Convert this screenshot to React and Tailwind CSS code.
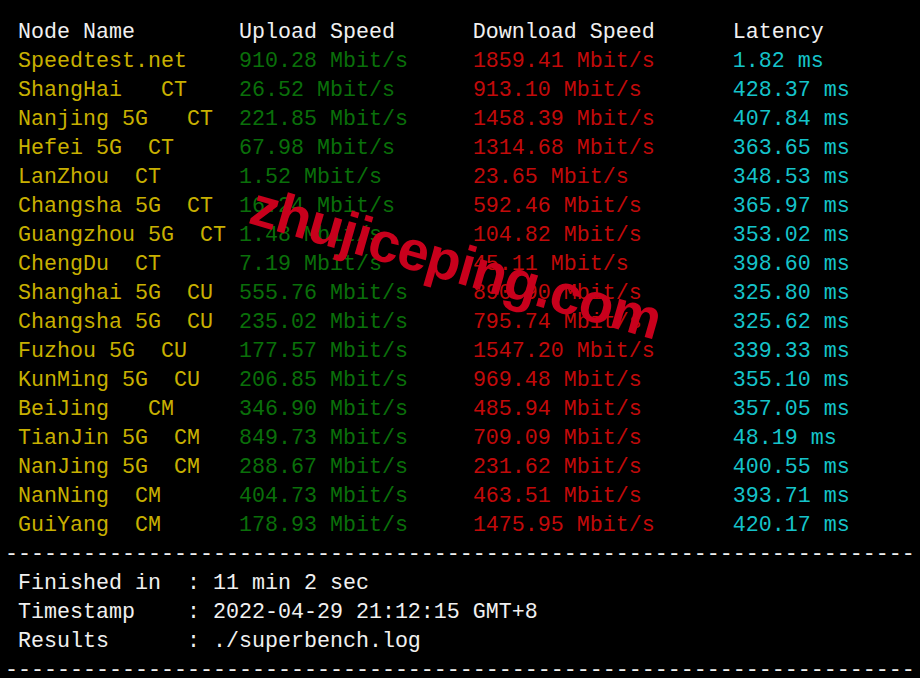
import React from "react";

const rows = [
  ["Speedtest.net", "910.28 Mbit/s", "1859.41 Mbit/s", "1.82 ms"],
  ["ShangHai   CT", "26.52 Mbit/s", "913.10 Mbit/s", "428.37 ms"],
  ["Nanjing 5G   CT", "221.85 Mbit/s", "1458.39 Mbit/s", "407.84 ms"],
  ["Hefei 5G  CT", "67.98 Mbit/s", "1314.68 Mbit/s", "363.65 ms"],
  ["LanZhou  CT", "1.52 Mbit/s", "23.65 Mbit/s", "348.53 ms"],
  ["Changsha 5G  CT", "16.24 Mbit/s", "592.46 Mbit/s", "365.97 ms"],
  ["Guangzhou 5G  CT", "1.48 Mbit/s", "104.82 Mbit/s", "353.02 ms"],
  ["ChengDu  CT", "7.19 Mbit/s", "45.11 Mbit/s", "398.60 ms"],
  ["Shanghai 5G  CU", "555.76 Mbit/s", "890.90 Mbit/s", "325.80 ms"],
  ["Changsha 5G  CU", "235.02 Mbit/s", "795.74 Mbit/s", "325.62 ms"],
  ["Fuzhou 5G  CU", "177.57 Mbit/s", "1547.20 Mbit/s", "339.33 ms"],
  ["KunMing 5G  CU", "206.85 Mbit/s", "969.48 Mbit/s", "355.10 ms"],
  ["BeiJing   CM", "346.90 Mbit/s", "485.94 Mbit/s", "357.05 ms"],
  ["TianJin 5G  CM", "849.73 Mbit/s", "709.09 Mbit/s", "48.19 ms"],
  ["NanJing 5G  CM", "288.67 Mbit/s", "231.62 Mbit/s", "400.55 ms"],
  ["NanNing  CM", "404.73 Mbit/s", "463.51 Mbit/s", "393.71 ms"],
  ["GuiYang  CM", "178.93 Mbit/s", "1475.95 Mbit/s", "420.17 ms"],
];

const dashes = "-".repeat(70);

export default function App() {
  return (
    <div
      className="relative w-[920px] h-[678px] overflow-hidden bg-black pl-[5px] pt-[18px] text-[21.67px] leading-[29px] whitespace-pre text-[#f0f0f0]"
      style={{ fontFamily: '"Liberation Mono", "DejaVu Sans Mono", monospace' }}
    >
      <div>
        {" " + "Node Name".padEnd(17) + "Upload Speed".padEnd(18) + "Download Speed".padEnd(20) + "Latency"}
      </div>
      {rows.map((r) => (
        <div key={r[0]}>
          <span className="text-[#c8b000]">{" " + r[0].padEnd(17)}</span>
          <span className="text-[#0a6f0a]">{r[1].padEnd(18)}</span>
          <span className="text-[#c20a0a]">{r[2].padEnd(20)}</span>
          <span className="text-[#15c3ca]">{r[3]}</span>
        </div>
      ))}
      <div>{dashes}</div>
      <div>{" Finished in  : 11 min 2 sec"}</div>
      <div>{" Timestamp    : 2022-04-29 21:12:15 GMT+8"}</div>
      <div>{" Results      : ./superbench.log"}</div>
      <div>{dashes}</div>

      {/* watermark */}
      <div
        className="absolute left-[456px] top-[263px] -translate-x-1/2 -translate-y-1/2 rotate-[16deg] text-[56px] leading-none font-bold tracking-[-1px] text-[#c8001c]"
        style={{ fontFamily: '"Liberation Sans", Arial, sans-serif' }}
      >
        zhujiceping.com
      </div>
    </div>
  );
}
